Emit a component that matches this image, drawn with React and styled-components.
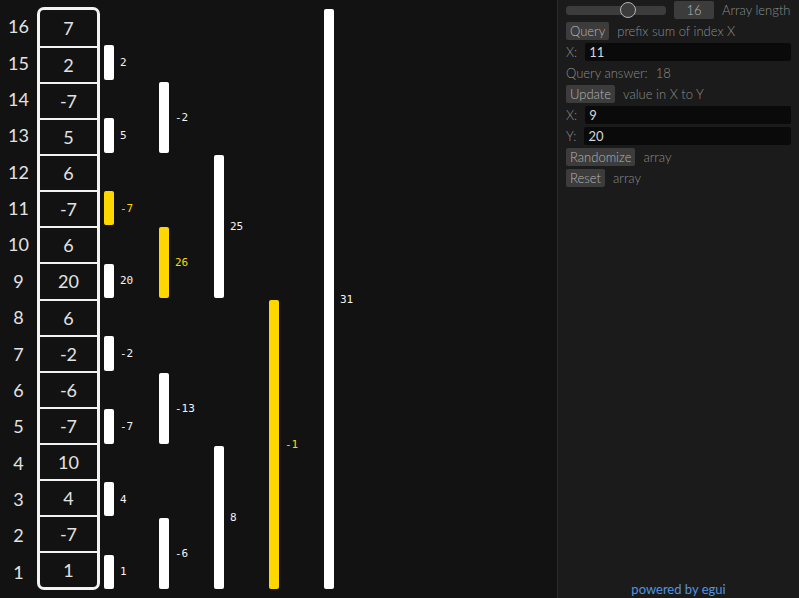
import React from "react";
import styled, { createGlobalStyle } from "styled-components";

const GlobalStyle = createGlobalStyle`
  html, body { margin: 0; padding: 0; background: #121212; }
  body { font-family: Lato, "Noto Sans", sans-serif; font-weight: 300; overflow: hidden; }
  * { box-sizing: border-box; }
`;

const values = [1, -7, 4, 10, -7, -6, -2, 6, 20, 6, -7, 6, 5, -7, 2, 7]; // index 1..16
const N = 16;
const lowbit = (i) => i & -i;
const tree = Array.from({ length: N }, (_, k) => {
  const i = k + 1;
  let s = 0;
  for (let j = i - lowbit(i) + 1; j <= i; j++) s += values[j - 1];
  return { i, sum: s, level: Math.log2(lowbit(i)) };
});
const active = new Set();
for (let i = 11; i > 0; i -= lowbit(i)) active.add(i);

const Page = styled.div`
  display: flex;
  width: 799px;
  height: 598px;
`;

const Canvas = styled.main`
  width: 557px;
  height: 100%;
  background: #121212;
  padding: 8px 0;
`;

const Grid = styled.div`
  display: grid;
  grid-template-columns: 37px 63px repeat(5, 55px);
  grid-template-rows: repeat(16, 1fr);
  height: 582px;
`;

const IndexLabel = styled.div`
  grid-column: 1;
  grid-row: ${(p) => p.$row};
  display: flex;
  align-items: center;
  justify-content: center;
  color: #e2e2e2;
  font-size: 18px;
  font-weight: 400;
`;

const ArrayBox = styled.div`
  grid-column: 2;
  grid-row: 1 / -1;
  margin-top: -1px;
  border: 3px solid #f2f2f2;
  border-radius: 7px;
  display: grid;
  grid-template-rows: repeat(16, 1fr);
  overflow: hidden;
`;

const Cell = styled.div`
  display: flex;
  align-items: center;
  justify-content: center;
  color: #e2e2e2;
  font-size: 18px;
  font-weight: 400;
  border-top: ${(p) => (p.$first ? "none" : "2.5px solid #f2f2f2")};
`;

const BarSlot = styled.div`
  grid-column: ${(p) => p.$col};
  grid-row: ${(p) => p.$row} / span ${(p) => p.$span};
  display: flex;
  align-items: center;
  padding-left: 4px;
`;

const Bar = styled.div`
  width: 10px;
  align-self: stretch;
  margin: 1px 0;
  border-radius: 2px;
  background: ${(p) => (p.$active ? "#ffd700" : "#ffffff")};
`;

const BarLabel = styled.span`
  margin-left: 6px;
  font-family: "DejaVu Sans Mono", monospace;
  font-size: 11px;
  color: ${(p) => (p.$active ? "#ffd700" : "#f4f4f4")};
`;

const Side = styled.aside`
  width: 242px;
  height: 100%;
  background: #1b1b1b;
  border-left: 1px solid #2a2a2a;
  padding: 1px 8px 0 8px;
  display: flex;
  flex-direction: column;
  gap: 3px;
  font-size: 13px;
`;

const Row = styled.div`
  display: flex;
  align-items: center;
  height: 18px;
  gap: 8px;
`;

const Label = styled.span`
  color: #8c8c8c;
  white-space: nowrap;
`;

const Button = styled.span`
  height: 18px;
  display: flex;
  align-items: center;
  padding: 0 4px;
  background: #3c3c3c;
  border-radius: 2px;
  color: #b4b4b4;
  white-space: nowrap;
`;

const SliderTrack = styled.div`
  position: relative;
  width: 100px;
  height: 9px;
  border-radius: 3px;
  background: #3c3c3c;
`;

const SliderHandle = styled.div`
  position: absolute;
  top: 50%;
  left: ${(p) => p.$pos}px;
  width: 16px;
  height: 16px;
  margin: -8px 0 0 -8px;
  border-radius: 50%;
  background: #3c3c3c;
  border: 1.5px solid #b4b4b4;
`;

const DragBox = styled.span`
  width: 40px;
  height: 18px;
  display: flex;
  align-items: center;
  justify-content: center;
  background: #3c3c3c;
  border-radius: 2px;
  color: #b4b4b4;
`;

const TextInput = styled.div`
  flex: 1;
  height: 18px;
  display: flex;
  align-items: center;
  padding: 0 4px;
  background: #0a0a0a;
  border-radius: 2px;
  color: #d8d8d8;
  font-weight: 400;
`;

const Footer = styled.div`
  margin-top: auto;
  display: flex;
  justify-content: center;
  padding-bottom: 1px;
`;

const Link = styled.span`
  color: #4f96e0;
  font-weight: 400;
`;

export default function App() {
  return (
    <>
      <GlobalStyle />
      <Page>
        <Canvas>
          <Grid>
            {tree.map(({ i }) => (
              <IndexLabel key={"i" + i} $row={17 - i}>
                {i}
              </IndexLabel>
            ))}
            <ArrayBox>
              {tree
                .slice()
                .reverse()
                .map(({ i }, k) => (
                  <Cell key={"c" + i} $first={k === 0}>
                    {values[i - 1]}
                  </Cell>
                ))}
            </ArrayBox>
            {tree.map(({ i, sum, level }) => (
              <BarSlot
                key={"b" + i}
                $col={3 + level}
                $row={17 - i}
                $span={lowbit(i)}
              >
                <Bar $active={active.has(i)} />
                <BarLabel $active={active.has(i)}>{sum}</BarLabel>
              </BarSlot>
            ))}
          </Grid>
        </Canvas>
        <Side>
          <Row>
            <SliderTrack>
              <SliderHandle $pos={62} />
            </SliderTrack>
            <DragBox>16</DragBox>
            <Label>Array length</Label>
          </Row>
          <Row>
            <Button>Query</Button>
            <Label>prefix sum of index X</Label>
          </Row>
          <Row>
            <Label>X:</Label>
            <TextInput>11</TextInput>
          </Row>
          <Row>
            <Label>Query answer:</Label>
            <Label>18</Label>
          </Row>
          <Row>
            <Button>Update</Button>
            <Label>value in X to Y</Label>
          </Row>
          <Row>
            <Label>X:</Label>
            <TextInput>9</TextInput>
          </Row>
          <Row>
            <Label>Y:</Label>
            <TextInput>20</TextInput>
          </Row>
          <Row>
            <Button>Randomize</Button>
            <Label>array</Label>
          </Row>
          <Row>
            <Button>Reset</Button>
            <Label>array</Label>
          </Row>
          <Footer>
            <Link>powered by egui</Link>
          </Footer>
        </Side>
      </Page>
    </>
  );
}
